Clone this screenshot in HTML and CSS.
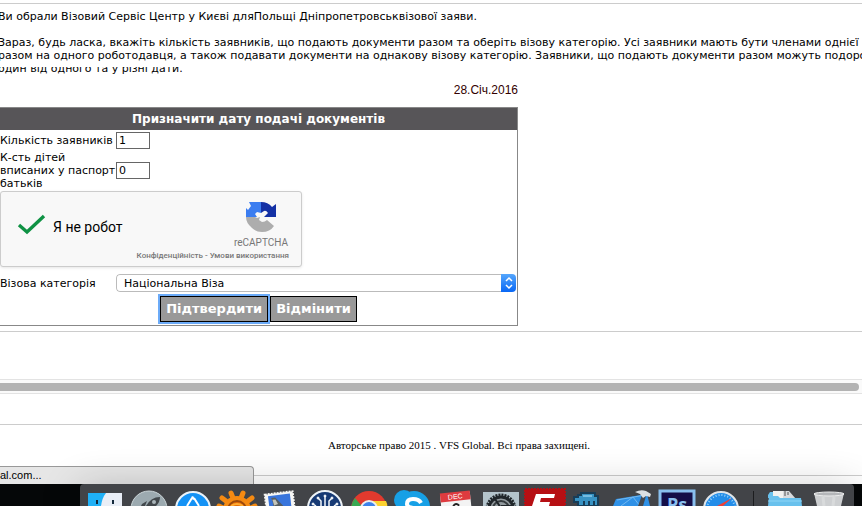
FILE: index.html
```html
<!DOCTYPE html>
<html lang="uk">
<head>
<meta charset="utf-8">
<meta name="viewport" content="width=device-width, initial-scale=1">
<title>VFS Global</title>
<link rel="stylesheet" href="styles.css">
</head>
<body>
<main class="content">
  <div class="intro">
    <p>Ви обрали Візовий Сервіс Центр у Києві дляПольщі Дніпропетровськвізової заяви.</p>
    <p>Зараз, будь ласка, вкажіть кількість заявників, що подають документи разом та оберіть візову категорію. Усі заявники мають бути членами однієї сім'ї<br>разом на одного роботодавця, а також подавати документи на однакову візову категорію. Заявники, що подають документи разом можуть подорожувати<br><span class="cut">один від одного та у різні дати.</span></p>
  </div>
  <div class="panel">
    <p class="date">28.Січ.2016</p>
    <form class="booking">
      <h1>Призначити дату подачі документів</h1>
      <div class="row">
        <label for="applicants">Кількість заявників</label>
        <input class="num" id="applicants" type="text" value="1">
      </div>
      <div class="row">
        <label for="children">К-сть дітей вписаних у паспорт батьків</label>
        <input class="num" id="children" type="text" value="0">
      </div>
      <div class="captcha">
        <svg class="check" viewBox="0 0 30 22"><path d="M2 11 L10 18 L27 2" fill="none" stroke="#0f9244" stroke-width="3.4"/></svg>
        <span class="human">Я не робот</span>
        <div class="brand">
          <svg class="arrows" viewBox="0 0 32 32">
            <path d="M1 16V7l2 2 3-4-2-4h12v11l-4-1-2 2 2 3z" fill="#3b7df0"/>
            <path d="M16 1q7 0 11 5l4-3v13H19l4-4q-2-3-4-2l-3 2z" fill="#1431a5"/>
            <path d="M1 16h9l2 1 3-1-1 3 3 2q3 0 5-2l7 6q-4 6-12 6-6 0-10-4-6-5-6-11z" fill="#adadad"/>
          </svg>
          <span class="name">reCAPTCHA</span>
        </div>
        <span class="terms"><a href="#">Конфіденційність</a> - <a href="#">Умови використання</a></span>
      </div>
      <div class="row category">
        <label for="category">Візова категорія</label>
        <div class="picker">
          <select id="category"><option>Національна Віза</option></select>
          <svg class="stepper" viewBox="0 0 15 18"><path d="M5 7l3-3 3 3M5 11l3 3 3-3" fill="none" stroke="#fff" stroke-width="1.5"/></svg>
        </div>
      </div>
      <div class="actions">
        <button class="active" type="submit">Підтвердити</button>
        <button type="button">Відмінити</button>
      </div>
    </form>
  </div>
</main>
<div class="gap"></div>
<div class="scroll"><div class="thumb"></div></div>
<div class="gap small"></div>
<footer class="footer">
  <p>Авторське право 2015 . VFS Global. Всі права захищені.</p>
  <div class="status">al.com...</div>
</footer>
<div class="desktop">
  <div class="dock">
    <svg class="app" viewBox="0 0 44 22"><path d="M5 9h34v13H5z" fill="#e9eef6"/><path d="M5 9h18q-4 5-5 13H5z" fill="#1fb0f6"/><path d="M14 16v4M30 16v4" stroke="#14293c" stroke-width="2"/></svg>
    <svg class="app" viewBox="0 0 44 22"><circle cx="22" cy="25" r="18" fill="#9caab0" stroke="#c9d3d6"/><path d="M33 13q-9 0-14 9h10q4-4 4-9z" fill="#42484c"/><circle cx="27" cy="18" r="2" fill="#aab5ba"/><path d="M20 17l-5 3-1 2h4z" fill="#42484c"/></svg>
    <svg class="app" viewBox="0 0 44 22"><circle cx="22" cy="25" r="17" fill="#1492f5" stroke="#eaf3fa" stroke-width="2"/><path d="M21 14l-5 8M23 14l5 8" stroke="#fff" stroke-width="2" fill="none"/><path d="M20 13l2-1 2 3-2 1z" fill="#fff"/></svg>
    <svg class="app" viewBox="0 0 44 22"><g stroke="#f58a12" stroke-width="5" stroke-linecap="round"><path d="M18 14l-2-5M26 14l2-5M11 17l-4-3M33 17l4-3M8 24l-4-2M36 24l4-2"/></g><circle cx="22" cy="26" r="14" fill="#f58a12"/><circle cx="22" cy="26" r="9" fill="#e66b07" stroke="#9c4a0c" stroke-width="2"/><path d="M16 22q6-4 12 0" stroke="#ffac30" stroke-width="2" fill="none"/></svg>
    <svg class="app" viewBox="0 0 44 22"><g transform="rotate(-7 20 20)"><path d="M7 9h28v16H7z" fill="#f6f6f4" stroke="#f6f6f4" stroke-width="2" stroke-dasharray="2 1"/><path d="M10 11h22v14H10z" fill="#3975dc"/><path d="M13 13l4 0 3 4 6 8H14q1-6-1-12z" fill="#555d62"/><path d="M14 15l3 0 2 5-4 1z" fill="#c4c4b9"/></g></svg>
    <svg class="app" viewBox="0 0 44 22"><circle cx="22" cy="24" r="17" fill="#173a74" stroke="#eef3f7" stroke-width="2"/><g stroke="#f3f7fa" fill="#fff"><path d="M22 22V12M18 22v-5l-3-3M26 22v-5l3-3M13 22l-3-2M31 22l3-2" fill="none" stroke-width="1.5"/><circle cx="22" cy="12" r="1"/><circle cx="15" cy="14" r="1"/><circle cx="29" cy="14" r="1"/><circle cx="10" cy="20" r="1"/><circle cx="34" cy="20" r="1"/></g></svg>
    <svg class="app" viewBox="0 0 44 22"><circle cx="22" cy="25" r="18" fill="#e23a2e"/><path d="M8 14l10 12H4q0-7 4-12z" fill="#38a852"/><path d="M22 17h17q2 4 1 8H22z" fill="#fdd22f"/><circle cx="22" cy="25" r="9" fill="#eee"/><circle cx="22" cy="25" r="7" fill="#3e82ea"/></svg>
    <svg class="app" viewBox="0 0 44 22"><circle cx="13" cy="16" r="10" fill="#17a0e6"/><circle cx="23" cy="23" r="16" fill="#17a0e6"/><path d="M30 19q-2-4-8-4-6 0-6 5 0 3 6 4" stroke="#fff" stroke-width="4" fill="none"/></svg>
    <svg class="app" viewBox="0 0 44 22"><g transform="rotate(-6 20 20)"><path d="M6 9h30v15H6z" fill="#f3f3f3"/><path d="M6 8h30v9H6z" fill="#df3b3f"/><text class="month" x="21" y="15" text-anchor="middle">DEC</text><path d="M18 22q3-4 6 0" stroke="#222" stroke-width="2" fill="none"/></g></svg>
    <svg class="app" viewBox="0 0 44 22"><path d="M4 8h36v14H4z" fill="#b4c4cc"/><circle cx="22" cy="25" r="14" fill="none" stroke="#20262a" stroke-width="3" stroke-dasharray="2 1"/><circle cx="22" cy="25" r="12" fill="#91999d" stroke="#20262a" stroke-width="3"/><circle cx="22" cy="25" r="8" fill="none" stroke="#343a3d" stroke-width="2"/><path d="M22 24l-6-9M22 22h11" stroke="#20262a" stroke-width="2"/></svg>
    <svg class="app" viewBox="0 0 44 22"><path d="M2 5h40v20H2z" fill="#b60f13" stroke="#b60f13" stroke-width="2" stroke-dasharray="2 1"/><path d="M13 10h19l-1 4H18l-1 4h10l-1 4H9z" fill="#fff"/></svg>
    <svg class="app" viewBox="0 0 44 22"><path d="M14 9h14v3h3v10H11V18H7v-5h4v-2h3z" fill="#3893c4" stroke="#183d57" stroke-width="2"/><path d="M17 17v5M22 17v5M27 17v5" stroke="#183d57" stroke-width="2"/><path d="M16 11h9v2h-9z" fill="#75bce1"/></svg>
    <svg class="app" viewBox="0 0 44 22"><path d="M5 15l31-5 3 12H2z" fill="#2f91e7"/><path d="M6 16l28-5M10 22l12-9 7 9" stroke="#73b9f0" fill="none"/><path d="M31 11l-4 11h5l3-10z" fill="#454a51"/><path d="M24 8q6-3 11-1l5 3-1 3-4-1-3 2-3-4z" fill="#dce0e3"/></svg>
    <svg class="app" viewBox="0 0 44 22"><path d="M5 7h34v20H5z" fill="#140e48" stroke="#89bfee" stroke-width="3"/><text class="ps" x="22" y="27" text-anchor="middle">Ps</text></svg>
    <svg class="app" viewBox="0 0 44 22"><circle cx="22" cy="25" r="17" fill="#238de9" stroke="#e0e5e9" stroke-width="2"/><circle cx="22" cy="25" r="14" fill="none" stroke="#9ad5fb" stroke-width="2" stroke-dasharray="1 2"/><path d="M33 14L18 22h6z" fill="#ef4037"/></svg>
    <span class="divider"></span>
    <svg class="app" viewBox="0 0 44 22"><path d="M10 7h12v8H10z" fill="#f1f1ef"/><path d="M20 7h6l7 8H20z" fill="#d8dadd"/><path d="M22 7v5M25 8v3" stroke="#555"/><path d="M5 11l2-3h3v6H5z" fill="#69c1ed"/><path d="M6 12h9l2 2h21l1 8H5z" fill="#69c1ed"/><path d="M5 17h34" stroke="#8ed5f6"/></svg>
    <svg class="app" viewBox="0 0 44 22"><path d="M7 9l3 13h24l3-13z" fill="#cdcfd1"/><path d="M16 13l1 9M27 13l-1 9" stroke="#d8dadb" stroke-width="3"/><ellipse cx="22" cy="10" rx="15" ry="2" fill="#b4b6b9" stroke="#eceded"/></svg>
  </div>
</div>
</body>
</html>
```
FILE: styles.css
```css
* {
  box-sizing: border-box;
}

body {
  margin: 0;
  min-height: 100vh;
  display: flex;
  flex-direction: column;
  overflow: hidden;
  background: #fff;
  color: #000;
  font: 11px/13px Verdana, "DejaVu Sans", sans-serif;
}

p, h1 {
  margin: 0;
}

.content {
  margin-top: 3px;
  padding: 6px 0 5px;
  border: solid #ccc;
  border-width: 1px 0;
}

.intro {
  display: grid;
  gap: 13px;
  margin-left: -2px;
  white-space: nowrap;
  overflow: hidden;
}

.cut {
  display: inline-block;
  clip-path: inset(5px 0 0);
}

.panel {
  max-width: 518px;
}

.date {
  padding: 8px 0 10px;
  color: #300;
  font: 12px/14px "Liberation Sans", Arial, sans-serif;
  text-align: right;
}

.booking {
  border: solid #888;
  border-width: 1px 1px 1px 0;
}

.booking h1 {
  background: #575558;
  color: #fff;
  font-size: 12px;
  line-height: 22px;
  text-align: center;
}

.row {
  display: grid;
  grid-template-columns: 116px 1fr;
  align-items: center;
  min-height: 20px;
  padding: 1px 1px 1px 0;
}

.num {
  width: 34px;
  height: 17px;
  padding: 0 2px;
  border: 1px solid #666;
  background: #fff;
  font: inherit;
}

.captcha {
  display: grid;
  grid-template-columns: 30px 1fr 56px;
  column-gap: 6px;
  align-items: center;
  max-width: 302px;
  height: 76px;
  padding: 8px 12px 3px 16px;
  border: 1px solid #ccc;
  border-radius: 3px;
  background: #f8f8f8;
  box-shadow: 0 1px 3px rgba(0, 0, 0, .1);
}

.check {
  width: 30px;
  height: 22px;
}

.human {
  padding-top: 4px;
  font: 14px/18px Roboto, sans-serif;
}

.brand {
  display: grid;
  justify-items: center;
  gap: 4px;
}

.arrows {
  width: 32px;
  height: 32px;
}

.name {
  color: #777;
  font: 10px/12px Roboto, sans-serif;
}

.terms {
  grid-column: 1 / -1;
  color: #777;
  font: 500 8px/12px Roboto, sans-serif;
  text-align: right;
}

.terms a {
  color: inherit;
  text-decoration: none;
}

.category {
  padding-top: 7px;
}

.picker {
  display: flex;
  height: 18px;
  overflow: hidden;
  border-radius: 4px;
}

.picker select {
  flex: 1;
  min-width: 0;
  padding: 0 7px;
  appearance: none;
  border: 1px solid #bbb;
  border-right: 0;
  border-radius: 4px 0 0 4px;
  background: #fff;
  color: #000;
  font: inherit;
}

.stepper {
  width: 15px;
  height: 18px;
  background: linear-gradient(#55a6fc, #0867f5);
  pointer-events: none;
}

.actions {
  display: flex;
  justify-content: center;
  gap: 2px;
  padding: 3px 0;
}

.actions button {
  height: 26px;
  padding: 0 5px;
  border: 1px solid #000;
  background: #999;
  color: #fff;
  font: bold 13px/16px Verdana, "DejaVu Sans", sans-serif;
}

.actions .active {
  box-shadow: 0 0 0 2px #6cabf8;
}

.gap {
  height: 47px;
}

.small {
  height: 30px;
}

.scroll {
  height: 15px;
  padding: 3px 3px 3px 0;
  border: solid #e3e3e3;
  border-width: 1px 0;
  background: #fafafa;
}

.thumb {
  height: 8px;
  border-radius: 0 4px 4px 0;
  background: #b3b3b3;
}

.footer {
  position: relative;
  height: 60px;
  border-top: 1px solid #ccc;
}

.footer p {
  height: 51px;
  padding: 14px 0 0 56px;
  border-bottom: 1px solid #ccc;
  font: 11px/13px "Liberation Serif", "Times New Roman", serif;
  text-align: center;
}

.status {
  position: absolute;
  bottom: 0;
  left: 0;
  width: 254px;
  height: 18px;
  border: solid #999;
  border-width: 1px 1px 0 0;
  border-radius: 0 4px 0 0;
  background: #e6e6e6;
  font: 11px/17px "Liberation Sans", Arial, sans-serif;
}

.desktop {
  position: relative;
  display: flex;
  flex: 1;
  min-height: 22px;
  padding: 0 9px 0 80px;
  background: #050708;
}

.dock {
  display: flex;
  flex: 1;
  padding: 0 3px;
  border-radius: 4px 4px 0 0;
  background: #424448;
  box-shadow: 0 8px 40px rgba(0, 0, 0, .3);
}

.app {
  flex: 0 1 44px;
  min-width: 0;
  height: 22px;
}

.divider {
  flex: 0 0 20px;
  height: 22px;
  background: linear-gradient(#1c1d1f, #1c1d1f) 10px 7px / 1px 15px no-repeat;
}

.month {
  fill: #fff;
  font: 7px "Liberation Sans", sans-serif;
}

.ps {
  fill: #89bfee;
  font: bold 18px "Open Sans", sans-serif;
}
```
